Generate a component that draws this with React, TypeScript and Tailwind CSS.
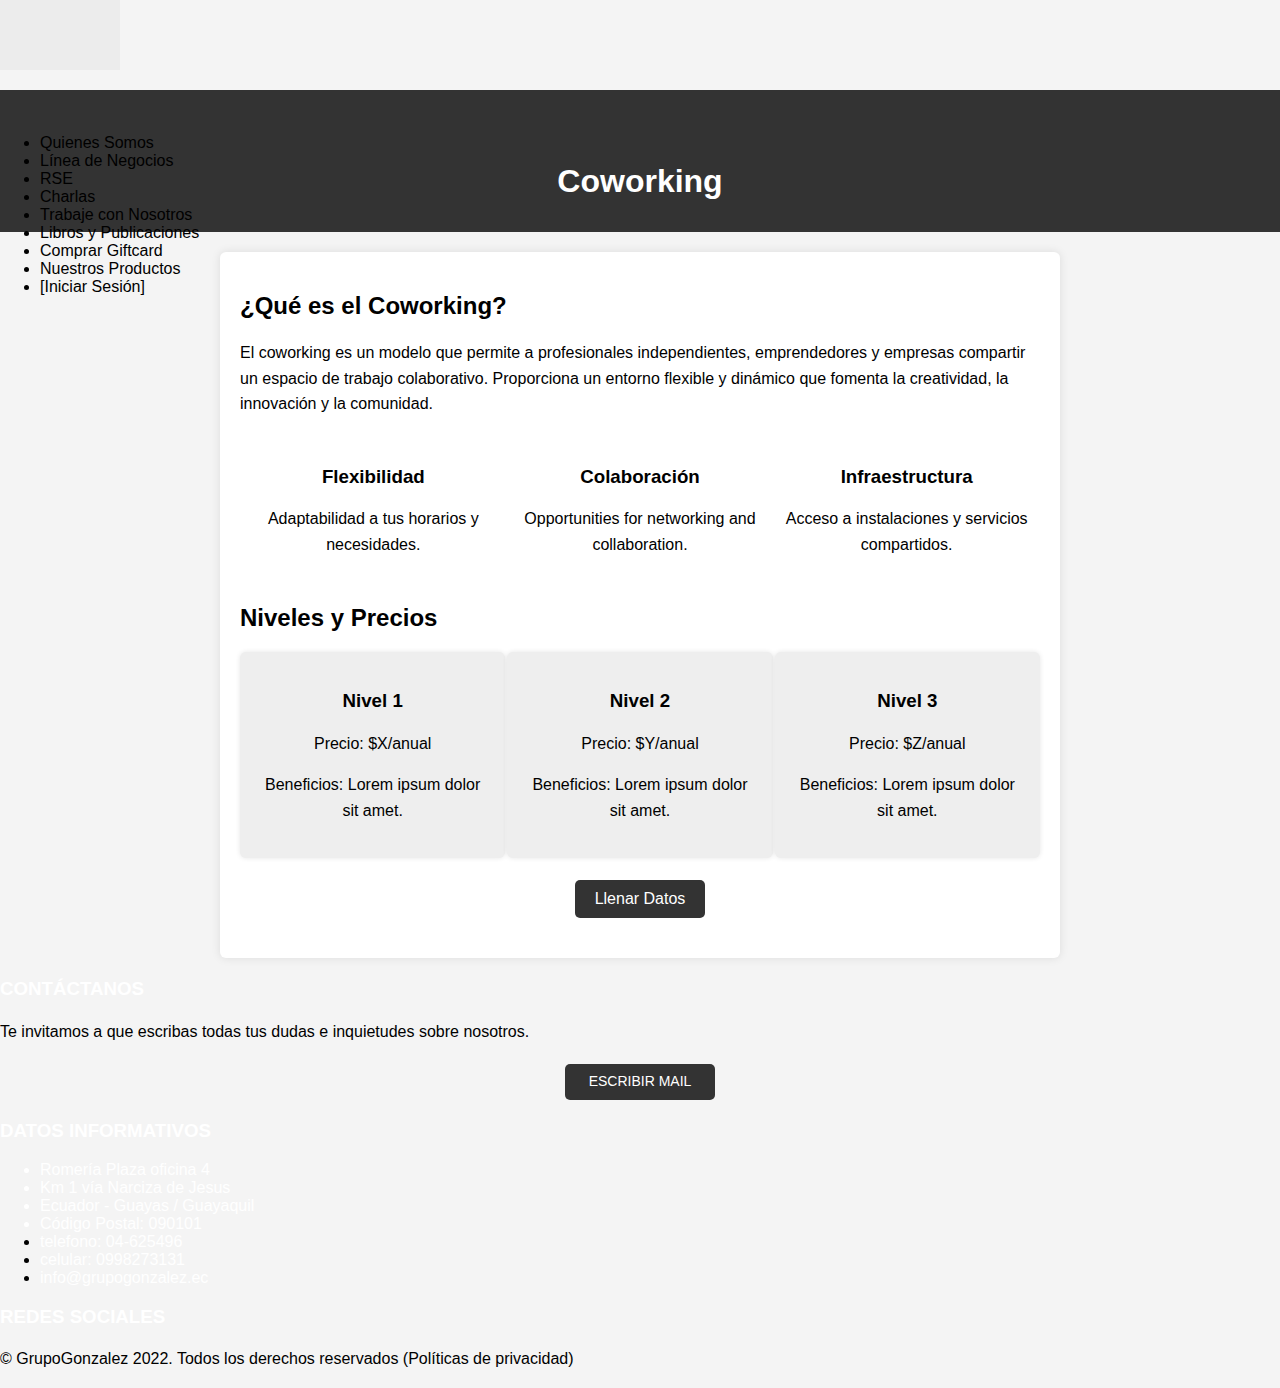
import React from "react";

const navItems = [
  "Quienes Somos",
  "Línea de Negocios",
  "RSE",
  "Charlas",
  "Trabaje con Nosotros",
  "Libros y Publicaciones",
  "Comprar Giftcard",
  "Nuestros Productos",
  "[Iniciar Sesión]",
];

const features = [
  { title: "Flexibilidad", text: "Adaptabilidad a tus horarios y necesidades." },
  { title: "Colaboración", text: "Opportunities for networking and collaboration." },
  { title: "Infraestructura", text: "Acceso a instalaciones y servicios compartidos." },
];

const niveles = [
  { name: "Nivel 1", price: "Precio: $X/anual" },
  { name: "Nivel 2", price: "Precio: $Y/anual" },
  { name: "Nivel 3", price: "Precio: $Z/anual" },
];

export default function App() {
  return (
    <div
      className="relative min-h-[1388px] bg-[#f4f4f4] text-black"
      style={{ fontFamily: '"Liberation Sans", Arial, sans-serif' }}
    >
      {/* logo placeholder */}
      <div className="h-[70px] w-[120px] bg-[#ececec]" />

      <header className="mt-[20px] h-[142px] bg-[#333333] pt-[73px] text-center">
        <h1 className="text-[32px] font-bold leading-[37px] text-white">Coworking</h1>
      </header>

      {/* menu that spills over the header */}
      <ul className="absolute left-0 top-[134px] list-disc pl-10 text-[16px] leading-[18px]">
        {navItems.map((item) => (
          <li key={item}>{item}</li>
        ))}
      </ul>

      <main className="mx-auto mt-[20px] w-[840px] rounded-md bg-white px-5 pb-10 pt-5 shadow-[0_0_10px_rgba(0,0,0,0.1)]">
        <h2 className="mt-[20px] text-[24px] font-bold leading-[28px]">¿Qué es el Coworking?</h2>
        <p className="mt-[20px] text-[16px] leading-[25.6px]">
          El coworking es un modelo que permite a profesionales independientes, emprendedores y empresas
          compartir un espacio de trabajo colaborativo. Proporciona un entorno flexible y dinámico que
          fomenta la creatividad, la innovación y la comunidad.
        </p>

        <div className="mt-[49px] grid grid-cols-3">
          {features.map((f) => (
            <div key={f.title} className="px-[10px] text-center">
              <h3 className="text-[18.72px] font-bold leading-[22px]">{f.title}</h3>
              <p className="mt-[18px] text-[16px] leading-[26px]">{f.text}</p>
            </div>
          ))}
        </div>

        <h2 className="mt-[46px] text-[24px] font-bold leading-[28px]">Niveles y Precios</h2>

        <div className="mt-[20px] grid grid-cols-3 gap-[2px]">
          {niveles.map((n) => (
            <div
              key={n.name}
              className="h-[206px] rounded-md bg-[#eeeeee] px-5 pt-[38px] text-center shadow-[0_0_5px_rgba(0,0,0,0.1)]"
            >
              <h3 className="text-[18.72px] font-bold leading-[22px]">{n.name}</h3>
              <p className="mt-[19px] text-[16px] leading-[25.6px]">{n.price}</p>
              <p className="mt-[16px] text-[16px] leading-[25.6px]">Beneficios: Lorem ipsum dolor sit amet.</p>
            </div>
          ))}
        </div>

        <div className="mt-[22px] flex justify-center">
          <button className="h-[38px] w-[130px] rounded-[5px] bg-[#333333] text-[16px] text-white">
            Llenar Datos
          </button>
        </div>
      </main>

      <footer className="pb-[20px]">
        <h3 className="mt-[20px] text-[18.72px] font-bold leading-[22px] text-white">CONTÁCTANOS</h3>
        <p className="mt-[23px] text-[16px] leading-[18px]">
          Te invitamos a que escribas todas tus dudas e inquietudes sobre nosotros.
        </p>
        <div className="mt-[23px] flex justify-center">
          <button className="h-[36px] w-[150px] rounded-[5px] bg-[#333333] text-[14px] text-white">
            ESCRIBIR MAIL
          </button>
        </div>

        <h3 className="mt-[20px] text-[18.72px] font-bold leading-[22px] text-white">DATOS INFORMATIVOS</h3>
        <ul className="mt-[19px] list-disc pl-10 text-[16px] leading-[18px]">
          <li className="text-white">Romería Plaza oficina 4</li>
          <li className="text-white">Km 1 vía Narciza de Jesus</li>
          <li className="text-white">Ecuador - Guayas / Guayaquil</li>
          <li className="text-white">Código Postal: 090101</li>
          <li>
            <span className="text-white">telefono: 04-625496</span>
          </li>
          <li>
            <span className="text-white">celular: 0998273131</span>
          </li>
          <li>
            <span className="text-white">info@grupogonzalez.ec</span>
          </li>
        </ul>

        <h3 className="mt-[19px] text-[18.72px] font-bold leading-[22px] text-white">REDES SOCIALES</h3>
        <p className="mt-[22px] text-[16px] leading-[18px]">
          © GrupoGonzalez 2022. Todos los derechos reservados (Políticas de privacidad)
        </p>
      </footer>
    </div>
  );
}
